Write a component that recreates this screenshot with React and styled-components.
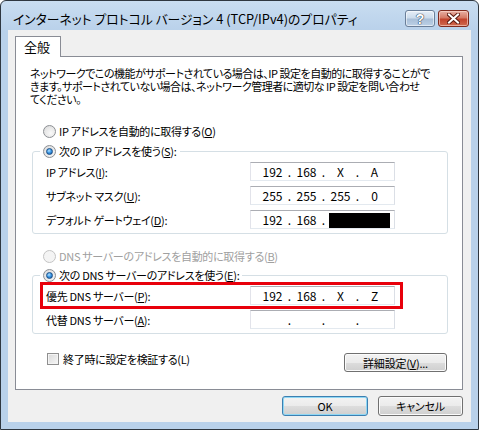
import React from "react";
import styled, { createGlobalStyle, css } from "styled-components";

const FONT = `"Noto Sans CJK JP", "Noto Sans", sans-serif`;

const GlobalStyle = createGlobalStyle`
  html, body { margin: 0; padding: 0; background: #ffffff; }
  body { font-family: ${FONT}; font-size: 11px; letter-spacing: -0.3px; color: #000; }
  #root { width: 479px; height: 430px; }
  * { font-feature-settings: "palt"; }
`;

const Window = styled.div`
  box-sizing: border-box;
  width: 479px;
  height: 430px;
  border: 1px solid #2f3740;
  border-radius: 6px 6px 0 0;
  background: linear-gradient(#c9ddf1, #b9d1ea 30px, #b9d1ea);
  display: flex;
  flex-direction: column;
  padding: 0 7px 7px 7px;
`;

const TitleBar = styled.div`
  height: 29px;
  display: flex;
  align-items: flex-start;
  justify-content: space-between;
  padding: 0 2px 0 5px;
`;

const Title = styled.div`
  margin-top: 10px;
  font-size: 12.8px;
  letter-spacing: 0;
  line-height: 16px;
  white-space: nowrap;
  color: #000;
`;

const Caption = styled.div`
  display: flex;
  gap: 3px;
  margin-top: 9px;
`;

const CapButton = styled.div`
  box-sizing: border-box;
  width: ${(p) => p.$w}px;
  height: 17px;
  border-radius: 3px;
  display: flex;
  align-items: center;
  justify-content: center;
  ${(p) =>
    p.$close
      ? css`
          border: 1px solid #7e2a1e;
          background: linear-gradient(#e8b0a4, #d57a66 45%, #c2432d 55%, #cf6a4f);
          box-shadow: inset 0 0 0 1px rgba(255, 220, 210, 0.6);
        `
      : css`
          border: 1px solid #6a7e98;
          background: linear-gradient(#e6eef7, #cddcec 45%, #a9bfd8 55%, #bcd0e6);
          box-shadow: inset 0 0 0 1px rgba(255, 255, 255, 0.55);
        `}
`;

const HelpGlyph = styled.span`
  font-family: "Liberation Sans", sans-serif;
  font-weight: bold;
  font-size: 14px;
  line-height: 14px;
  color: #fff;
  text-shadow: 0 0 1px #2c3e55, 0 0 1px #2c3e55, 0 0 1px #2c3e55;
`;

const Client = styled.div`
  flex: 1;
  background: #f0f0f0;
  display: flex;
  flex-direction: column;
  padding: 6px 8px 0 7px;
`;

const TabStrip = styled.div`
  display: flex;
`;

const Tab = styled.div`
  box-sizing: border-box;
  width: 46px;
  height: 21px;
  margin-bottom: -1px;
  border: 1px solid #898c95;
  border-bottom: none;
  background: #fff;
  padding-left: 8px;
  font-size: 13px;
  letter-spacing: 0;
  line-height: 20px;
  position: relative;
  z-index: 1;
`;

const Panel = styled.div`
  box-sizing: border-box;
  height: 334px;
  border: 1px solid #898c95;
  background: #fff;
  padding: 10px 14px 0 14px;
  display: flex;
  flex-direction: column;
`;

const Paragraph = styled.div`
  line-height: 13px;
  letter-spacing: -0.5px;
  white-space: nowrap;
`;

const RadioRow = styled.div`
  display: flex;
  align-items: center;
  gap: 3px;
  height: 16px;
  line-height: 16px;
  margin-left: ${(p) => p.$ml ?? 13}px;
  margin-top: ${(p) => p.$mt ?? 0}px;
  color: ${(p) => (p.$disabled ? "#a0a0a0" : "#000")};
  white-space: nowrap;
`;

const Radio = styled.span`
  box-sizing: border-box;
  width: 13px;
  height: 13px;
  border-radius: 50%;
  border: 1px solid ${(p) => (p.$disabled ? "#c4c4c4" : "#8c8f94")};
  background: ${(p) =>
    p.$disabled
      ? "#f4f4f4"
      : "radial-gradient(circle at 60% 65%, #f9f9f9 0%, #e6e6e6 60%, #d4d4d4 100%)"};
  display: flex;
  align-items: center;
  justify-content: center;
  flex: none;
  &::after {
    content: "";
    display: ${(p) => (p.$checked ? "block" : "none")};
    box-sizing: border-box;
    width: 7px;
    height: 7px;
    border-radius: 50%;
    border: 1px solid #1c4f86;
    background: radial-gradient(circle at 40% 35%, #b6e2ff 0%, #3d9ae6 45%, #0f4f9c 100%);
  }
`;

const Group = styled.fieldset`
  margin: ${(p) => p.$mt}px 0 0 2px;
  padding: ${(p) => p.$pt}px 44px 4px 7px;
  border: 1px solid #d5dfe5;
  border-radius: 3px;
  min-width: 0;
  display: flex;
  flex-direction: column;
  gap: ${(p) => p.$gap}px;
`;

const Legend = styled.legend`
  margin-left: 0;
  padding: 0 3px;
  height: 16px;
  line-height: 16px;
`;

const FieldRow = styled.div`
  display: flex;
  align-items: center;
  justify-content: space-between;
  white-space: nowrap;
  ${(p) =>
    p.$highlight
      ? css`
          box-sizing: border-box;
          height: 27px;
          border: 3px solid #e8000b;
          padding: 0 5px 0 3px;
          margin-top: -1px;
        `
      : css`
          height: 19px;
          padding: 0 8px 0 6px;
        `}
`;

const IpBox = styled.div`
  box-sizing: border-box;
  width: 145px;
  height: 19px;
  border: 1px solid;
  border-color: #abadb3 #dbdfe6 #e3e9ef #e2e3ea;
  background: #fff;
  display: flex;
  align-items: center;
  padding-left: 8px;
  font-size: 12px;
  letter-spacing: 0;
  line-height: 17px;
`;

const Seg = styled.span`
  width: 27px;
  text-align: center;
`;

const Dot = styled.span`
  width: 7px;
  text-align: center;
`;

const Redacted = styled.span`
  align-self: flex-end;
  width: 61px;
  height: 15px;
  background: #000;
  margin-left: 2px;
`;

const BottomRow = styled.div`
  display: flex;
  justify-content: space-between;
  align-items: flex-start;
  margin-top: 19px;
  padding: 0 1px 0 17px;
`;

const CheckRow = styled.label`
  display: flex;
  align-items: center;
  gap: 4px;
  height: 14px;
  line-height: 14px;
  margin-top: -1px;
  white-space: nowrap;
`;

const CheckBox = styled.span`
  box-sizing: border-box;
  width: 12px;
  height: 12px;
  border: 1px solid #8f8f8f;
  background: linear-gradient(135deg, #d9d9d9, #f7f7f7);
  box-shadow: inset 0 0 0 1px #f4f4f4;
  flex: none;
`;

const Button = styled.button`
  box-sizing: border-box;
  width: ${(p) => p.$w}px;
  height: ${(p) => p.$h ?? 20}px;
  padding: 0;
  border: 1px solid #707070;
  border-radius: 3px;
  background: linear-gradient(#f3f3f3 0%, #ebebeb 50%, #dddddd 51%, #cfcfcf 100%);
  box-shadow: inset 0 0 0 1px #fbfbfb;
  font-family: ${FONT};
  font-size: 11px;
  letter-spacing: -0.2px;
  line-height: 16px;
  color: #000;
  ${(p) =>
    p.$default &&
    css`
      border-color: #3c7fb1;
      box-shadow: inset 0 0 0 1px #8fd7f4;
    `}
`;

const Footer = styled.div`
  display: flex;
  justify-content: flex-end;
  gap: 10px;
  margin-top: 6px;
`;

const Ip = ({ parts, redact }) => (
  <IpBox>
    <Seg>{parts[0]}</Seg>
    <Dot>.</Dot>
    <Seg>{parts[1]}</Seg>
    <Dot>.</Dot>
    {redact ? (
      <Redacted />
    ) : (
      <>
        <Seg>{parts[2]}</Seg>
        <Dot>.</Dot>
        <Seg>{parts[3]}</Seg>
      </>
    )}
  </IpBox>
);

export default function App() {
  return (
    <>
      <GlobalStyle />
      <Window>
        <TitleBar>
          <Title>インターネット プロトコル バージョン 4 (TCP/IPv4)のプロパティ</Title>
          <Caption>
            <CapButton $w={30}>
              <HelpGlyph>?</HelpGlyph>
            </CapButton>
            <CapButton $w={31} $close>
              <svg width="13" height="11" viewBox="0 0 13 11">
                <path d="M2 1.5 L11 9.5 M11 1.5 L2 9.5" stroke="#5a1a10" strokeWidth="4" strokeLinecap="square" />
                <path d="M2 1.5 L11 9.5 M11 1.5 L2 9.5" stroke="#ffffff" strokeWidth="2" strokeLinecap="square" />
              </svg>
            </CapButton>
          </Caption>
        </TitleBar>
        <Client>
          <TabStrip>
            <Tab>全般</Tab>
          </TabStrip>
          <Panel>
            <Paragraph>
              ネットワークでこの機能がサポートされている場合は、IP 設定を自動的に取得することがで
              <br />
              きます。サポートされていない場合は、ネットワーク管理者に適切な IP 設定を問い合わせ
              <br />
              てください。
            </Paragraph>
            <RadioRow $mt={17}>
              <Radio />
              <span>
                IP アドレスを自動的に取得する(<u>O</u>)
              </span>
            </RadioRow>
            <Group $mt={4} $pt={3} $gap={5}>
              <Legend>
                <RadioRow $ml={0}>
                  <Radio $checked />
                  <span>
                    次の IP アドレスを使う(<u>S</u>):
                  </span>
                </RadioRow>
              </Legend>
              <FieldRow>
                <span>
                  IP アドレス(<u>I</u>):
                </span>
                <Ip parts={["192", "168", "X", "A"]} />
              </FieldRow>
              <FieldRow>
                <span>
                  サブネット マスク(<u>U</u>):
                </span>
                <Ip parts={["255", "255", "255", "0"]} />
              </FieldRow>
              <FieldRow>
                <span>
                  デフォルト ゲートウェイ(<u>D</u>):
                </span>
                <Ip parts={["192", "168"]} redact />
              </FieldRow>
            </Group>
            <RadioRow $mt={14} $disabled>
              <Radio $disabled />
              <span>
                DNS サーバーのアドレスを自動的に取得する(<u>B</u>)
              </span>
            </RadioRow>
            <Group $mt={3} $pt={0} $gap={1}>
              <Legend>
                <RadioRow $ml={0}>
                  <Radio $checked />
                  <span>
                    次の DNS サーバーのアドレスを使う(<u>E</u>):
                  </span>
                </RadioRow>
              </Legend>
              <FieldRow $highlight>
                <span>
                  優先 DNS サーバー(<u>P</u>):
                </span>
                <Ip parts={["192", "168", "X", "Z"]} />
              </FieldRow>
              <FieldRow>
                <span>
                  代替 DNS サーバー(<u>A</u>):
                </span>
                <Ip parts={["", "", "", ""]} />
              </FieldRow>
            </Group>
            <BottomRow>
              <CheckRow>
                <CheckBox />
                <span>終了時に設定を検証する(L)</span>
              </CheckRow>
              <Button $w={103} $h={19}>
                詳細設定(<u>V</u>)...
              </Button>
            </BottomRow>
          </Panel>
          <Footer>
            <Button $w={86} $default>
              OK
            </Button>
            <Button $w={85}>キャンセル</Button>
          </Footer>
        </Client>
      </Window>
    </>
  );
}
